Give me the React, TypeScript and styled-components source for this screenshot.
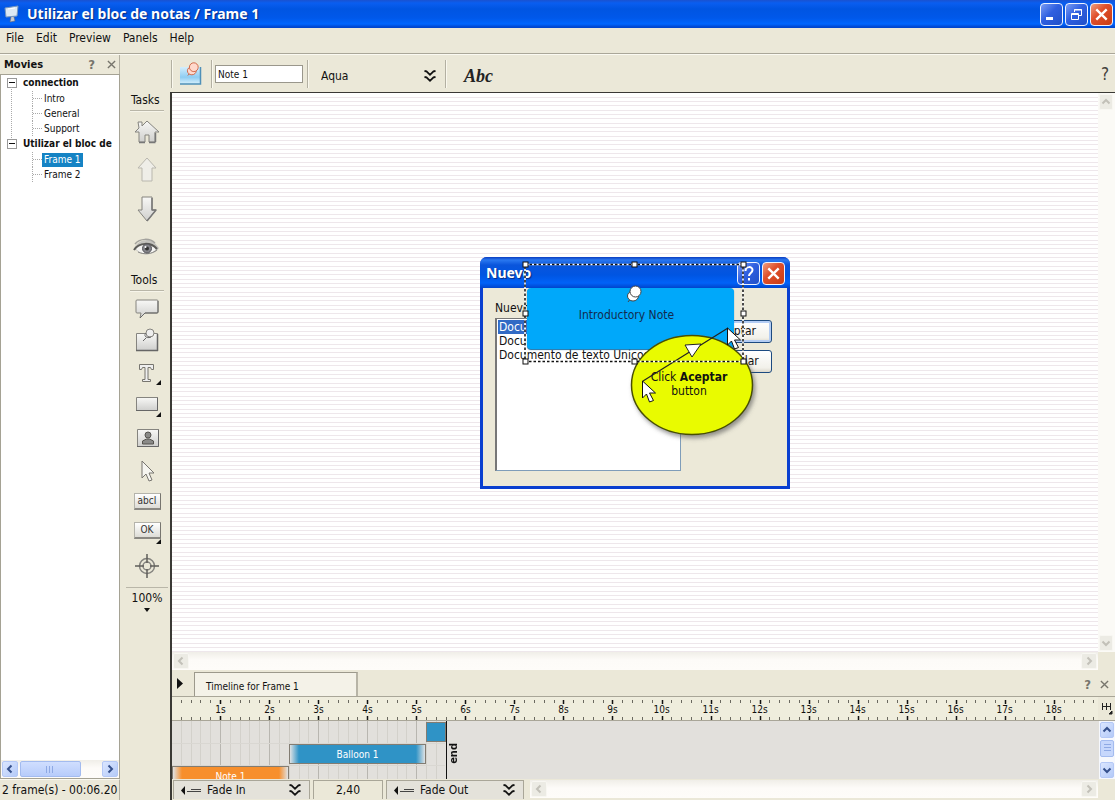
import React from 'react';
import styled, { createGlobalStyle } from 'styled-components';

const ui = '"DejaVu Sans Condensed", "DejaVu Sans", sans-serif';

const GlobalStyle = createGlobalStyle`
  * { box-sizing: border-box; }
  html, body { margin: 0; height: 100%; }
  body { font-family: ${ui}; font-size: 12px; color: #111; overflow: hidden; }
  #root { height: 100%; }
  button, input, select { font-family: inherit; color: inherit; margin: 0; }
  ul { list-style: none; margin: 0; padding: 0; }
  svg { display: block; flex: none; }
`;

const App_ = styled.div`
  display: flex;
  flex-direction: column;
  height: 100vh;
  background: #ebe8d8;
`;

const TitleBar = styled.header`
  flex: none;
  display: flex;
  align-items: center;
  height: 28px;
  padding: 0 2px 0 4px;
  gap: 7px;
  background: linear-gradient(#1a52d0 0, #0a5ef0 3px, #0055e2 9px, #0058ea 18px, #0066ff 24px, #0046cf 27px);
`;

const AppTitle = styled.h1`
  flex: 1;
  margin: 0;
  font: bold 14px/20px "Noto Sans", ${ui};
  color: #fff;
  text-shadow: 1px 1px 1px #0a2a80;
  white-space: nowrap;
`;

const WindowButtons = styled.div`
  display: flex;
  gap: 2px;
`;

const CaptionButton = styled.button<{ $close?: boolean }>`
  display: grid;
  place-items: center;
  width: 23px;
  height: 23px;
  padding: 0;
  border: 1px solid #eef3ff;
  border-radius: 4px;
  background: ${p => (p.$close
    ? 'linear-gradient(135deg, #f0a080, #e0502c 40%, #c83c14)'
    : 'linear-gradient(135deg, #7a9cf4, #2f5fe0 45%, #2050c8)')};
`;

const MenuBar = styled.nav`
  flex: none;
  display: flex;
  align-items: center;
  gap: 12px;
  height: 26px;
  padding: 0 6px 6px;
  border-bottom: 1px solid #aaa799;
  box-shadow: 0 1px 0 #fbfaf2;
`;

const MenuItem = styled.button`
  padding: 0;
  border: 0;
  background: none;
  font-size: 12px;
  line-height: 16px;
`;

const Main = styled.div`
  flex: 1;
  min-height: 0;
  display: flex;
`;

const MoviesPanel = styled.aside`
  flex: none;
  display: flex;
  flex-direction: column;
  width: 120px;
  padding-top: 1px;
`;

const MoviesHead = styled.div`
  display: flex;
  align-items: center;
  height: 19px;
  padding: 0 3px 0 4px;
  gap: 12px;
  border-right: 1px solid #b3b0a2;
`;

const PanelTitle = styled.h2`
  flex: 1;
  margin: 0;
  font: bold 11px/16px ${ui};
`;

const IconButton = styled.button`
  display: grid;
  place-items: center;
  padding: 0;
  border: 0;
  background: none;
  color: #77756c;
`;

const HelpButton = styled(IconButton)<{ $big?: boolean }>`
  font: ${p => (p.$big ? '17px/20px' : 'bold 13px/16px')} ${ui};
  color: ${p => (p.$big ? '#44423c' : '#77756c')};
`;

const Tree = styled.ul`
  flex: 1;
  min-height: 0;
  && { padding-left: 6px; }
  border: 1px solid #a5a294;
  border-bottom: 0;
  background: #fff;
  overflow: hidden;
`;

const TreeGroup = styled.li`
  position: relative;
  &:not(:last-child)::before {
    content: '';
    position: absolute;
    left: 4px;
    top: 12px;
    bottom: -4px;
    border-left: 1px dotted #aaa;
  }
`;

const GroupRow = styled.div`
  display: flex;
  align-items: center;
  gap: 6px;
  height: 15px;
  font: bold 10px/15px ${ui};
  white-space: nowrap;
`;

const Toggle = styled.button`
  flex: none;
  display: grid;
  place-items: center;
  width: 10px;
  height: 10px;
  padding: 0;
  border: 1px solid #999;
  background: #fff;
  &::before { content: ''; width: 6px; height: 1px; background: #111; }
`;

const Leaves = styled.ul`
  && { margin-left: 25px; padding: 1px 0 0; }
`;

const Leaf = styled.li`
  display: flex;
  align-items: center;
  height: 15px;
  border-left: 1px dotted #aaa;
  &::before { content: ''; width: 9px; border-top: 1px dotted #aaa; }
`;

const LeafLink = styled.a<{ $on?: boolean }>`
  padding: 0 2px;
  font-size: 10px;
  line-height: 14px;
  text-decoration: none;
  white-space: nowrap;
  color: ${p => (p.$on ? '#fff' : '#111')};
  background: ${p => (p.$on ? '#1583c4' : 'transparent')};
`;

const Scroll = styled.div<{ $vertical?: boolean }>`
  flex: none;
  display: flex;
  flex-direction: ${p => (p.$vertical ? 'column' : 'row')};
  width: ${p => (p.$vertical ? '17px' : 'auto')};
  height: ${p => (p.$vertical ? 'auto' : '18px')};
  background: ${p => (p.$vertical ? '#fbfaf6' : 'linear-gradient(#f0eee8, #fdfbf8 8px, #fefcf9)')};
`;

const ScrollButton = styled.button<{ $active?: boolean }>`
  flex: none;
  display: grid;
  place-items: center;
  width: 16px;
  height: 16px;
  margin: 1px;
  padding: 0;
  border: 1px solid ${p => (p.$active ? '#b4c8f6' : '#f8f7f2')};
  border-radius: 2px;
  background: ${p => (p.$active ? 'linear-gradient(135deg, #dbe6ff, #b4caf8)' : '#ecebe4')};
  color: ${p => (p.$active ? '#35508c' : '#c2c0b8')};
`;

const VScrollButton = styled(ScrollButton)`
  width: 14px;
`;

const Track = styled.div`
  flex: 1;
  display: flex;
`;

const Thumb = styled.div<{ $vertical?: boolean }>`
  display: grid;
  place-items: center;
  width: ${p => (p.$vertical ? '14px' : '61px')};
  height: ${p => (p.$vertical ? '17px' : '16px')};
  margin: 1px;
  border: 1px solid #a3bbef;
  border-radius: 2px;
  background: ${p => (p.$vertical ? '#c6d7fc' : 'linear-gradient(#d0defe, #b7ccfb)')};
`;

const MoviesScroll = styled(Scroll)`
  border: 1px solid #a5a294;
  border-top: 0;
  height: 19px;
`;

const Status = styled.div`
  height: 21px;
  padding: 0 2px;
  border-top: 1px solid #fbfaf2;
  border-right: 1px solid #b3b0a2;
  font-size: 12px;
  line-height: 20px;
  white-space: nowrap;
`;

const ToolColumn = styled.aside`
  flex: none;
  display: flex;
  flex-direction: column;
  align-items: center;
  width: 50px;
  padding: 37px 0 0 4px;
`;

const ToolHeading = styled.h3`
  width: 34px;
  height: 20px;
  margin: 0;
  padding-left: 1px;
  border-bottom: 1px solid #b9b6a8;
  box-shadow: 0 1px 0 #f7f5ea;
  font: 12px/19px ${ui};
  white-space: nowrap;
`;

const ToolGroup = styled.div<{ $tall?: boolean }>`
  display: flex;
  flex-direction: column;
  padding: ${p => (p.$tall ? '0 0 4px' : '2px 0 6px')};
  & > button { height: ${p => (p.$tall ? '39px' : '32px')}; }
`;

const ToolButton = styled.button`
  display: grid;
  place-items: center;
  width: 34px;
  padding: 0;
  border: 0;
  background: none;
`;

const Zoom = styled.button`
  display: flex;
  flex-direction: column;
  align-items: center;
  width: 42px;
  padding: 2px 0 0;
  gap: 2px;
  border: 0;
  border-top: 1px solid #b9b6a8;
  background: none;
  font-size: 12px;
  line-height: 16px;
`;

const Work = styled.main`
  flex: 1;
  min-width: 0;
  display: flex;
  flex-direction: column;
`;

const Toolbar = styled.div`
  flex: none;
  display: flex;
  align-items: center;
  height: 38px;
  padding: 5px 6px 3px 1px;
`;

const ToolbarCell = styled.div<{ $w: number; $low?: boolean }>`
  display: flex;
  align-items: center;
  width: ${p => p.$w}px;
  height: 28px;
  padding-top: ${p => (p.$low ? 4 : 0)}px;
  border-left: 1px solid #b3b0a2;
  box-shadow: inset 1px 0 0 #faf8ee;
`;

const NoteButton = styled(IconButton)`
  width: 36px;
`;

const NameInput = styled.input`
  width: 88px;
  height: 18px;
  margin-left: 3px;
  padding: 0 2px;
  border: 1px solid #9a978c;
  background: #fff;
  font-size: 10px;
  line-height: 16px;
`;

const SelectWrap = styled.label<{ $w: number }>`
  position: relative;
  display: flex;
  align-items: center;
  width: ${p => p.$w}px;
  & > svg { position: absolute; right: 8px; pointer-events: none; }
`;

const PlainSelect = styled.select<{ $pad: number }>`
  appearance: none;
  width: 100%;
  height: 19px;
  padding: 0 24px 0 ${p => p.$pad}px;
  border: 0;
  background: transparent;
  font-size: 12px;
`;

const FontButton = styled(IconButton)`
  margin-left: 18px;
  font: italic bold 18px/24px "Liberation Serif", serif;
  color: #222;
`;

const Spacer = styled.div`
  flex: 1;
`;

const Frame = styled.div`
  flex: 1;
  min-height: 0;
  display: flex;
  flex-direction: column;
  border-left: 2px solid #3a3935;
`;

const StageRow = styled.div`
  flex: 1;
  min-height: 0;
  display: flex;
  border-top: 1px solid #3a3935;
`;

const Stage = styled.div`
  flex: 1;
  min-width: 0;
  display: grid;
  place-items: center;
  overflow: hidden;
  background: repeating-linear-gradient(
    #fff 0 4px, #eee7eb 4px 5px, #fff 5px 8px, #eee7eb 8px 9px, #fff 9px 12px, #eee7eb 12px 13px
  );
`;

const StageScroll = styled.div`
  display: flex;
  padding-right: 17px;
  background: #ebe8d8;
  & > div { flex: 1; }
`;

const Dialog = styled.section`
  position: relative;
  width: 310px;
  height: 232px;
  padding: 0 3px 3px;
  border-radius: 7px 7px 0 0;
  background: #0a3fd0;
`;

const DialogTitle = styled.div`
  display: flex;
  align-items: center;
  height: 31px;
  margin: 0 -3px;
  padding: 2px 5px 0 6px;
  gap: 2px;
  border-radius: 7px 7px 0 0;
  background: linear-gradient(#0a3cc0 0, #2a78f0 3px, #0a55dc 8px, #0055e2 18px, #0062f8 26px, #0044cc);
`;

const DialogHeading = styled.h2`
  flex: 1;
  margin: 0;
  font: bold 14px/18px "Noto Sans", ${ui};
  color: #fff;
  text-shadow: 1px 1px 1px #0a2a80;
`;

const DialogBody = styled.div`
  display: flex;
  align-items: flex-start;
  height: 198px;
  padding: 12px 15px 0 12px;
  background: #ece9d8;
`;

const FieldCol = styled.div`
  display: flex;
  flex-direction: column;
  gap: 2px;
  line-height: 16px;
`;

const DocList = styled.ul`
  && { padding: 1px; }
  width: 186px;
  height: 153px;
  border: 1px solid #7f9db9;
  border-left: 2px solid #777;
  border-top-color: #777;
  background: #fff;
  line-height: 14px;
`;

const DocItem = styled.li<{ $on?: boolean }>`
  padding: 0 1px;
  white-space: nowrap;
  color: ${p => (p.$on ? '#fff' : '#111')};
  background: ${p => (p.$on ? '#316ac5' : 'transparent')};
`;

const DialogButtons = styled.div`
  display: flex;
  flex-direction: column;
  gap: 7px;
  margin: 20px 0 0 auto;
`;

const XpButton = styled.button<{ $default?: boolean }>`
  width: 74px;
  height: 23px;
  padding: 0;
  border: 1px solid #1c4a80;
  border-radius: 3px;
  background: linear-gradient(#fff, #f2f1ea 80%, #dcd8cc);
  box-shadow: ${p => (p.$default ? 'inset 0 0 0 2px #b4cdf4' : 'none')};
  font-size: 12px;
`;

const Note = styled.div`
  position: absolute;
  left: 47px;
  top: 31px;
  width: 207px;
  height: 61px;
  padding: 17px 8px 0 0;
  border-radius: 4px;
  background: #00a8fa;
  box-shadow: 0 1px 1px #1a70a8;
  text-align: center;
  line-height: 20px;
  color: #132c4e;
`;

const Overlay = styled.svg`
  position: absolute;
  left: 0;
  top: 0;
  overflow: visible;
`;

const BalloonText = styled.p`
  position: absolute;
  left: 159px;
  top: 113px;
  width: 100px;
  margin: 0;
  text-align: center;
  line-height: 14px;
`;

const Timeline = styled.section`
  flex: none;
  display: flex;
  flex-direction: column;
`;

const TabRow = styled.div`
  display: flex;
  align-items: center;
  height: 26px;
  padding: 0 6px 0 5px;
`;

const Tab = styled.button`
  align-self: flex-end;
  width: 164px;
  height: 24px;
  margin-left: 10px;
  padding: 4px 0 0 11px;
  border: 1px solid #9c998c;
  border-right: 2px solid #b7b4a6;
  border-bottom: 0;
  background: #f4f2e8;
  font-size: 10px;
  text-align: left;
`;

const TabTools = styled.div`
  display: flex;
  gap: 9px;
  margin-left: auto;
  padding-top: 3px;
`;

const Ruler = styled.div`
  position: relative;
  display: flex;
  height: 25px;
  padding-left: 24px;
  border-top: 1px solid #a9a698;
  border-bottom: 1px solid #a9a698;
  background: #efeddd;
  overflow: hidden;
`;

const Ticks = styled.svg`
  position: absolute;
  left: 0;
  top: 0;
`;

const Second = styled.span`
  flex: none;
  width: 49px;
  text-align: center;
  font-size: 10px;
  line-height: 26px;
`;

const ScaleButton = styled(IconButton)`
  position: absolute;
  right: 0;
  top: 0;
  width: 17px;
  height: 23px;
  background: #ebe8d8;
`;

const Lanes = styled.div`
  display: flex;
  height: 58px;
`;

const LaneArea = styled.div`
  position: relative;
  flex: 1;
  display: flex;
  align-items: flex-start;
  background: #e2e0dc;
  overflow: hidden;
`;

const LaneStack = styled.div`
  position: relative;
  width: 275px;
  height: 58px;
  border-right: 1px solid #111;
`;

const Lane = styled.div`
  position: relative;
  display: flex;
  height: 22px;
  padding-top: 1px;
`;

const Clip = styled.div<{ $tone: string; $fade: boolean }>`
  height: 20px;
  border: 1px solid #827c72;
  background: ${p => (p.$fade
    ? `linear-gradient(90deg, #dfe2e4, ${p.$tone} 9px, ${p.$tone} calc(100% - 9px), #dfe2e4)`
    : p.$tone)};
  color: #fff;
  font-size: 10px;
  line-height: 19px;
  text-align: center;
`;

const EndLabel = styled.span`
  margin: 22px 0 0;
  writing-mode: vertical-rl;
  transform: rotate(180deg);
  font: bold 11px/14px ${ui};
`;

const LaneScroll = styled(Scroll)`
  width: 16px;
  background: #f6f8fd;
`;

const TimelineFoot = styled.div`
  display: flex;
  height: 21px;
  padding: 1px 17px 1px 1px;
  gap: 3px;
`;

const FootSelect = styled(SelectWrap)`
  height: 19px;
  border: 1px solid #a9a698;
  border-bottom: 0;
  background: #e4e2da;
  & > svg:first-child { left: 7px; right: auto; }
`;

const TimeInput = styled.input`
  width: 70px;
  height: 19px;
  border: 1px solid #a9a698;
  border-bottom: 0;
  background: #ebe8d8;
  font-size: 12px;
  text-align: center;
`;

const FootScroll = styled(Scroll)`
  flex: 1;
  margin-left: 3px;
`;

const Chevron = ({ d }: { d: string }) => (
  <svg width="10" height="10" viewBox="0 0 10 10" fill="none" stroke="currentColor" strokeWidth="2">
    <path d={d} />
  </svg>
);
const LEFT = 'M6.5 1.5L3 5l3.5 3.5';
const RIGHT = 'M3.5 1.5L7 5 3.5 8.5';
const UP = 'M1.5 6.5L5 3l3.5 3.5';
const DOWN = 'M1.5 3.5L5 7l3.5-3.5';

const DoubleChevron = () => (
  <svg width="12" height="13" viewBox="0 0 12 13" fill="none" stroke="#111" strokeWidth="1.8">
    <path d="M.5 1l2 .3L6 4.800l3.500-3.500 2-.3M.5 7l2 .3L6 10.800l3.500-3.500 2-.3" />
  </svg>
);

const CloseX = ({ size = 9, color = '#77756c', w = 1.5 }: { size?: number; color?: string; w?: number }) => (
  <svg width={size} height={size} viewBox="0 0 10 10" stroke={color} strokeWidth={w}>
    <path d="M1 1l8 8M9 1L1 9" />
  </svg>
);

const FadeArrow = () => (
  <svg width="22" height="9" viewBox="0 0 22 9">
    <path d="M4 0v9L0 4.500z" fill="#111" />
    <path d="M6 5.500h4M10 3.500h10M10 5.500h10" stroke="#444" />
  </svg>
);

const Svg = ({ children }: { children: React.ReactNode }) => (
  <svg width="34" height="32" viewBox="0 0 34 32" fill="url(#metal)" stroke="#85847f" strokeLinejoin="round">
    {children}
  </svg>
);

const Corner = () => <path d="M31 23v5h-5z" fill="#111" stroke="none" />;

const icons: Record<string, React.ReactNode> = {
  home: (
    <Svg>
      <path d="M8 7h4v4l5-5 12 11h-4v10h-6v-7h-4v7H9V17H5l4-4z" />
      <path d="M9 27.500h6M19 27.500h6.500M25.500 18v9" stroke="#777" fill="none" strokeWidth="1.500" />
    </Svg>
  ),
  up: <Svg><path d="M17 4l9 10h-4v13H12V14H8z" stroke="#b9b7ae" fill="#efeee8" /></Svg>,
  down: <Svg><path d="M17 28l9-11h-4V4H12v13H8z" /><path d="M22 5v12h4l-9 11" fill="none" stroke="#777" strokeWidth="1.500" /></Svg>,
  eye: (
    <Svg>
      <path d="M4 17C7 8 18 6 24 10l5 6c-3 6-16 10-24 1z" fill="#c4c3be" stroke="none" />
      <path d="M6 17c5-5 15-6 20 0-4 6-15 6-20 0z" fill="#f4f4f2" stroke="none" />
      <path d="M5 12c5-6 15-6 20-1" fill="none" stroke="#a3a29d" strokeWidth="1.500" />
      <path d="M4 18c5-8 17-8 23-1" fill="none" stroke="#5c5b57" strokeWidth="2" />
      <path d="M8 20c6 3 14 2 19-2" fill="none" stroke="#8a8985" />
      <circle cx="17" cy="16.500" r="4.500" fill="#85858a" stroke="#55555a" />
      <circle cx="17" cy="16.500" r="2" fill="#333" stroke="none" />
      <circle cx="15.500" cy="15" r="1" fill="#fff" stroke="none" />
    </Svg>
  ),
  balloon: (
    <Svg>
      <path d="M7 7h20q1 0 1 1v11q0 1-1 1H15l-5 5 1-5H7q-1 0-1-1V8q0-1 1-1z" />
      <path d="M28 8v11q0 1-1 1H15l-5 5" fill="none" stroke="#666" />
    </Svg>
  ),
  note: (
    <Svg>
      <path d="M6.500 8.500h21v17h-21z" />
      <path d="M6 25.500h22M27.500 9v17" stroke="#666" strokeWidth="1.500" />
      <circle cx="20" cy="8" r="4" fill="#eee" />
      <path d="M16 8c-3 3 1 6 5 4M16 13l-3 3" fill="none" stroke="#666" />
    </Svg>
  ),
  text: (
    <Svg>
      <path d="M9.500 7.500h14v5h-2l-1-2h-2.500v12h2.500v2h-8v-2h2.500v-12h-2.500l-1 2h-2z" fill="#eee" stroke="#77756f" />
      <Corner />
    </Svg>
  ),
  rect: (
    <Svg>
      <path d="M6.500 8.500h21v13h-21z" />
      <path d="M6 21.500h21.500v-13" fill="none" stroke="#666" />
      <Corner />
    </Svg>
  ),
  person: (
    <Svg>
      <path d="M7.500 8.500h21v17h-21z" />
      <path d="M7 25.500h21.500v-17" fill="none" stroke="#666" />
      <circle cx="18" cy="14" r="3" fill="#8a8a88" stroke="#55534f" />
      <path d="M12.500 23v-3l4-2h3l4 2v3z" fill="#8a8a88" stroke="#55534f" />
    </Svg>
  ),
  cursor: <Svg><path d="M12 8v17l4-4 3 7 3-1-3-7h5z" fill="#f6f5f0" stroke="#77756f" /></Svg>,
  target: (
    <Svg>
      <circle cx="17" cy="17" r="7.500" fill="none" stroke="#85847f" strokeWidth="1.500" />
      <circle cx="17" cy="17" r="4" fill="none" stroke="#85847f" strokeWidth="1.500" />
      <path d="M17 5v9M17 20v9M5 17h9M20 17h9" fill="none" stroke="#5f5e5a" strokeWidth="1.500" />
    </Svg>
  ),
};

const Chip = styled.span`
  display: block;
  width: 27px;
  height: 17px;
  border: 1px solid #b4b3ab;
  border-right-color: #77756f;
  border-bottom: 2px solid #8a8882;
  background: linear-gradient(#fff, #dddcd6);
  font-size: 10px;
  line-height: 14px;
  text-align: center;
  color: #333;
`;

const CornerWrap = styled.span`
  display: grid;
  justify-items: center;
  width: 34px;
  & > svg { margin-left: 23px; }
`;

const tasks = ['home', 'up', 'down', 'eye'];
const tools = ['balloon', 'note', 'text', 'rect', 'person', 'cursor'];

const movies = [
  { name: 'connection', frames: ['Intro', 'General', 'Support'] },
  { name: 'Utilizar el bloc de', frames: ['Frame 1', 'Frame 2'] },
];

const pointer = 'M0 0v17l4-4 3 8 4-1.500-4-7.500h6z';
const handles = [[45, 7], [154, 7], [263, 7], [45, 56], [263, 56], [45, 104], [154, 104], [263, 104]];
const clips = [
  { label: '', start: 254, width: 20, tone: '#2f93c6', fade: false },
  { label: 'Balloon 1', start: 117, width: 137, tone: '#2f93c6', fade: true },
  { label: 'Note 1', start: 0, width: 117, tone: '#f78f2c', fade: true },
];
const STEP = 49.05;

function Pin({ red }: { red?: boolean }) {
  return (
    <g stroke={red ? '#c8502c' : '#444'} fill={red ? '#ffd9cc' : '#fff'}>
      <path d="M4 13l-3 4" />
      <ellipse cx="6" cy="11" rx="5.500" ry="5" />
      <circle cx="8.500" cy="6.500" r="5.500" />
    </g>
  );
}

function Movies() {
  return (
    <MoviesPanel>
      <MoviesHead>
        <PanelTitle>Movies</PanelTitle>
        <HelpButton>?</HelpButton>
        <IconButton aria-label="Close"><CloseX /></IconButton>
      </MoviesHead>
      <Tree>
        {movies.map(m => (
          <TreeGroup key={m.name}>
            <GroupRow><Toggle aria-label="Collapse" />{m.name}</GroupRow>
            <Leaves>
              {m.frames.map(f => (
                <Leaf key={f}><LeafLink href="#" $on={f === 'Frame 1'}>{f}</LeafLink></Leaf>
              ))}
            </Leaves>
          </TreeGroup>
        ))}
      </Tree>
      <MoviesScroll>
        <ScrollButton $active aria-label="Left"><Chevron d={LEFT} /></ScrollButton>
        <Track>
          <Thumb>
            <svg width="9" height="7" stroke="#8ea9e4"><path d="M.5 0v7M3.500 0v7M6.500 0v7" /></svg>
          </Thumb>
        </Track>
        <ScrollButton $active aria-label="Right"><Chevron d={RIGHT} /></ScrollButton>
      </MoviesScroll>
      <Status>2 frame(s) - 00:06.20</Status>
    </MoviesPanel>
  );
}

function Tools() {
  return (
    <ToolColumn>
      <ToolHeading>Tasks</ToolHeading>
      <ToolGroup $tall>
        {tasks.map(t => <ToolButton key={t} aria-label={t}>{icons[t]}</ToolButton>)}
      </ToolGroup>
      <ToolHeading>Tools</ToolHeading>
      <ToolGroup>
        {tools.map(t => <ToolButton key={t} aria-label={t}>{icons[t]}</ToolButton>)}
        <ToolButton><Chip>abcI</Chip></ToolButton>
        <ToolButton>
          <CornerWrap>
            <Chip>OK</Chip>
            <svg width="5" height="5"><path d="M5 0v5H0z" fill="#111" /></svg>
          </CornerWrap>
        </ToolButton>
        <ToolButton aria-label="target">{icons.target}</ToolButton>
      </ToolGroup>
      <Zoom>
        100%
        <svg width="6" height="4"><path d="M0 0h6L3 4z" fill="#111" /></svg>
      </Zoom>
    </ToolColumn>
  );
}

function CapturedDialog() {
  return (
    <Dialog>
      <DialogTitle>
        <DialogHeading>Nuevo</DialogHeading>
        <CaptionButton aria-label="Help">
          <svg width="12" height="15" fill="none" stroke="#fff" strokeWidth="2">
            <path d="M2.500 5c0-5 7-5 7-1 0 3-3.500 3-3.500 6M6 12v2.500" />
          </svg>
        </CaptionButton>
        <CaptionButton $close aria-label="Close"><CloseX size={13} color="#fff" w={1.8} /></CaptionButton>
      </DialogTitle>
      <DialogBody>
        <FieldCol>
          <span>Nuevo:</span>
          <DocList>
            <DocItem $on>Documento</DocItem>
            <DocItem>Documento</DocItem>
            <DocItem>Documento de texto Unicode</DocItem>
          </DocList>
        </FieldCol>
        <DialogButtons>
          <XpButton $default>Aceptar</XpButton>
          <XpButton>Cancelar</XpButton>
        </DialogButtons>
      </DialogBody>
      <Note>Introductory Note</Note>
      <Overlay width="309" height="232">
        <defs>
          <filter id="shade" x="-20%" y="-20%" width="140%" height="140%">
            <feDropShadow dx="2" dy="3" stdDeviation="2" floodColor="#555" floodOpacity="0.6" />
          </filter>
        </defs>
        <g transform="translate(147 28)"><Pin /></g>
        <ellipse cx="212" cy="128" rx="60.500" ry="49.500" fill="#e9fb00" stroke="#4a5000" strokeWidth="1.500" filter="url(#shade)" />
      </Overlay>
      <BalloonText>Click <b>Aceptar</b><br />button</BalloonText>
      <Overlay width="309" height="232">
        <path d="M163 124L248 71" stroke="#222" strokeWidth="1.200" />
        <path d="M205 88l16-1-9 13z" fill="#fff" stroke="#222" />
        <g fill="none" strokeWidth="1.500">
          <path d="M45 7.500h218v97H45z" stroke="#fff" />
          <path d="M45 7.500h218v97H45z" stroke="#111" strokeDasharray="2.500 2" />
        </g>
        <g fill="#fff" stroke="#111">
          {handles.map(([x, y]) => <rect key={`${x}-${y}`} x={x - 2} y={y - 2} width="5" height="5" />)}
          <path d={pointer} transform="translate(162.500 124)" />
          <path d={pointer} transform="translate(247.500 71)" />
        </g>
      </Overlay>
    </Dialog>
  );
}

function TimelinePanel() {
  const ticks = Array.from({ length: 94 }, (_, i) => i + 1);
  const path = (list: number[], a: number, b: number) =>
    list.map(i => `M${Math.round((i * STEP) / 5) - 0.5} ${a}V${b}`).join('');
  const minor = ticks.filter(i => i % 5);
  const major = ticks.filter(i => i % 5 === 0);
  const inner = ticks.filter(i => i < 28);
  return (
    <Timeline>
      <TabRow>
        <IconButton aria-label="Play"><svg width="7" height="11"><path d="M0 0l6 5.500L0 11z" fill="#111" /></svg></IconButton>
        <Tab>Timeline for Frame 1</Tab>
        <TabTools>
          <HelpButton>?</HelpButton>
          <IconButton aria-label="Close"><CloseX /></IconButton>
        </TabTools>
      </TabRow>
      <Ruler>
        <Ticks width="927" height="23">
          <path d={path(minor, 3, 6) + path(minor, 20, 23)} stroke="#6b6960" />
          <path d={path(major, 3, 7) + path(major, 19, 23)} stroke="#111" strokeWidth="1.500" />
        </Ticks>
        {Array.from({ length: 18 }, (_, i) => <Second key={i}>{i + 1}s</Second>)}
        <ScaleButton aria-label="Scale">
          <svg width="12" height="12" fill="none" stroke="#222">
            <path d="M1.500 0v7M5.500 0v7M9.500 0v7M1 3.500h9" /><path d="M11 8v3H8z" fill="#222" />
          </svg>
        </ScaleButton>
      </Ruler>
      <Lanes>
        <LaneArea>
          <LaneStack>
            <Ticks width="273" height="58">
              <path d={path(inner.filter(i => i % 5), 0, 58)} stroke="#d3d1cb" />
              <path d={path(inner.filter(i => i % 5 === 0), 0, 58)} stroke="#b8b6b0" />
              <path d="M0 22.500h273M0 44.500h273" stroke="#d9d7d2" />
            </Ticks>
            {clips.map(c => (
              <Lane key={c.start}>
                <Clip $tone={c.tone} $fade={c.fade} style={{ marginLeft: c.start, width: c.width }}>{c.label}</Clip>
              </Lane>
            ))}
          </LaneStack>
          <EndLabel>end</EndLabel>
        </LaneArea>
        <LaneScroll $vertical>
          <VScrollButton $active aria-label="Up"><Chevron d={UP} /></VScrollButton>
          <Track><Thumb $vertical><svg width="7" height="9" stroke="#8ea9e4"><path d="M0 .5h7M0 3.500h7M0 6.500h7" /></svg></Thumb></Track>
          <VScrollButton $active aria-label="Down"><Chevron d={DOWN} /></VScrollButton>
        </LaneScroll>
      </Lanes>
      <TimelineFoot>
        <FootSelect $w={137}>
          <FadeArrow />
          <PlainSelect $pad={33} aria-label="Fade in"><option>Fade In</option></PlainSelect>
          <DoubleChevron />
        </FootSelect>
        <TimeInput aria-label="Duration" defaultValue="2,40" />
        <FootSelect $w={138}>
          <FadeArrow />
          <PlainSelect $pad={33} aria-label="Fade out"><option>Fade Out</option></PlainSelect>
          <DoubleChevron />
        </FootSelect>
        <FootScroll>
          <ScrollButton aria-label="Left"><Chevron d={LEFT} /></ScrollButton>
          <Track />
          <ScrollButton aria-label="Right"><Chevron d={RIGHT} /></ScrollButton>
        </FootScroll>
      </TimelineFoot>
    </Timeline>
  );
}

export default function App() {
  return (
    <App_>
      <GlobalStyle />
      <TitleBar>
        <svg width="16" height="18" viewBox="0 0 16 18">
          <defs>
            <linearGradient id="metal" x1="0" y1="0" x2="0" y2="1">
              <stop offset="0" stopColor="#f8f8f6" /><stop offset="1" stopColor="#cfcfcd" />
            </linearGradient>
          </defs>
          <path d="M1 3l13-2-1 10-11 1z" fill="#dce8f4" stroke="#7898c0" />
          <path d="M7 12l-1 5 5-1-1-4" fill="#c8ccd0" stroke="#667" strokeWidth=".6" />
          <path d="M4 4l7-1" stroke="#fff" />
        </svg>
        <AppTitle>Utilizar el bloc de notas / Frame 1</AppTitle>
        <WindowButtons>
          <CaptionButton aria-label="Minimize"><svg width="13" height="13"><path d="M1 9h7v3H1z" fill="#fff" /></svg></CaptionButton>
          <CaptionButton aria-label="Restore">
            <svg width="13" height="13" fill="none" stroke="#fff">
              <path d="M4.500 4V1.500h7v6H9M4 2h8" /><path d="M1.500 5.500h7v6h-7zM1 6.500h8" />
            </svg>
          </CaptionButton>
          <CaptionButton $close aria-label="Close"><CloseX size={13} color="#fff" w={1.8} /></CaptionButton>
        </WindowButtons>
      </TitleBar>
      <MenuBar>
        {['File', 'Edit', 'Preview', 'Panels', 'Help'].map(m => <MenuItem key={m}>{m}</MenuItem>)}
      </MenuBar>
      <Main>
        <Movies />
        <Tools />
        <Work>
          <Toolbar>
            <ToolbarCell $w={40}>
              <NoteButton aria-label="Note">
                <svg width="24" height="24">
                  <defs>
                    <linearGradient id="sky" x1="0" y1="0" x2="0" y2="1">
                      <stop offset="0" stopColor="#d4eefc" /><stop offset=".6" stopColor="#8fcdf2" /><stop offset="1" stopColor="#d8f0fc" />
                    </linearGradient>
                  </defs>
                  <path d="M2 5h20v17H2z" fill="url(#sky)" />
                  <path d="M2 22h20.500V5" fill="none" stroke="#4f90b8" strokeWidth="1.500" />
                  <g transform="translate(9 0) scale(.8)"><Pin red /></g>
                </svg>
              </NoteButton>
            </ToolbarCell>
            <ToolbarCell $w={96}><NameInput aria-label="Name" defaultValue="Note 1" /></ToolbarCell>
            <ToolbarCell $w={138} $low>
              <SelectWrap $w={136}>
                <PlainSelect $pad={13} aria-label="Style"><option>Aqua</option></PlainSelect>
                <DoubleChevron />
              </SelectWrap>
            </ToolbarCell>
            <ToolbarCell $w={60} $low><FontButton>Abc</FontButton></ToolbarCell>
            <Spacer />
            <HelpButton $big>?</HelpButton>
          </Toolbar>
          <Frame>
            <StageRow>
              <Stage><CapturedDialog /></Stage>
              <Scroll $vertical>
                <VScrollButton aria-label="Up"><Chevron d={UP} /></VScrollButton>
                <Track />
                <VScrollButton aria-label="Down"><Chevron d={DOWN} /></VScrollButton>
              </Scroll>
            </StageRow>
            <StageScroll>
              <Scroll>
                <ScrollButton aria-label="Left"><Chevron d={LEFT} /></ScrollButton>
                <Track />
                <ScrollButton aria-label="Right"><Chevron d={RIGHT} /></ScrollButton>
              </Scroll>
            </StageScroll>
            <TimelinePanel />
          </Frame>
        </Work>
      </Main>
    </App_>
  );
}
